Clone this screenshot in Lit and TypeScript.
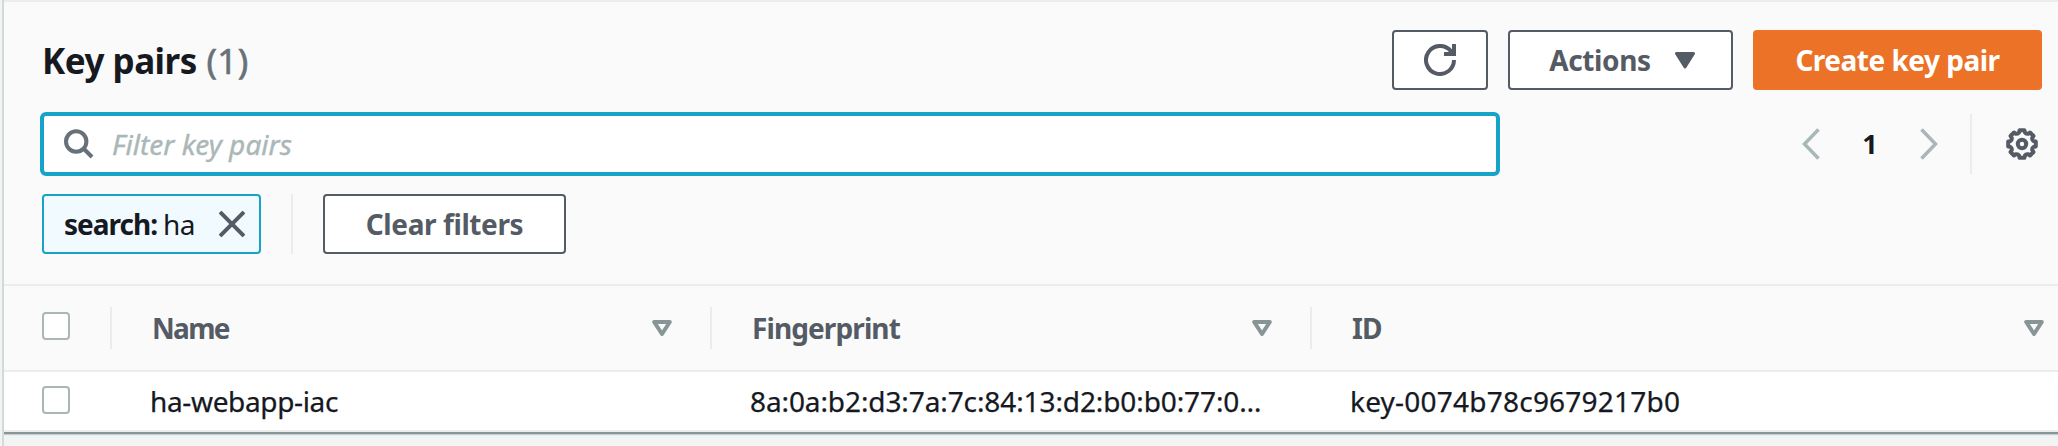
import { LitElement, html, css, svg } from "lit";
import { customElement } from "lit/decorators.js";

const chevron = (points: string) => html`
  <svg class="chevron" width="20" height="32" viewBox="0 0 20 32">${svg`<polyline points=${points} />`}</svg>`;

const sortIcon = html`
  <svg class="sort" width="20" height="16" viewBox="0 0 20 16">
    <path d="M2.2 2h15.6L10 14z" />
  </svg>`;

/* Outline of an eight-toothed cog centred on (16, 16). */
const gearPath = (() => {
  const parts: string[] = [];
  const at = (deg: number, r: number) => {
    const a = (deg * Math.PI) / 180;
    return `${(16 + r * Math.sin(a)).toFixed(2)} ${(16 - r * Math.cos(a)).toFixed(2)}`;
  };
  for (let i = 0; i < 8; i++) {
    const d = i * 45;
    parts.push(
      `${i ? "L" : "M"}${at(d - 10, 14)}L${at(d + 10, 14)}L${at(d + 14, 12)}Q${at(d + 22.5, 10.6)} ${at(d + 31, 12)}`
    );
  }
  return parts.join("") + "Z";
})();

@customElement("app-root")
export class AppRoot extends LitElement {
  static styles = css`
    :host {
      display: block;
      height: 446px;
      box-sizing: border-box;
      padding-left: 2px;
      overflow: hidden;
      background: #f2f3f3;
      color: #16191f;
      font: 28px/36px "Noto Sans", "Open Sans", sans-serif;
      white-space: nowrap;
    }
    * { box-sizing: border-box; }
    svg { display: block; flex: none; fill: none; }
    .shell {
      height: 446px;
      border-left: 2px solid;
      border-image: linear-gradient(90deg, #d5dbdb 50%, #aab7b8 50%) 2;
    }
    .panel {
      height: 434px;
      display: flex;
      flex-direction: column;
      background: #fff;
      border-top: 2px solid #eaeded;
      border-bottom: 2px solid #879596;
      box-shadow: 0 1px 1px #c8cfd0;
    }
    .top {
      height: 284px;
      flex: none;
      padding: 28px 16px 0 36px;
      background: #fafafa;
      border-bottom: 2px solid #eaeded;
    }
    .bar { display: flex; align-items: center; height: 60px; }
    .title { flex: 1; padding: 2px 0 0 2px; font-size: 35px; font-weight: 700; letter-spacing: -0.5px; }
    .count { font-weight: 400; color: #687078; letter-spacing: 0.4px; margin-left: 1px; -webkit-text-stroke: 0.6px #687078; }
    .btn {
      height: 60px;
      display: flex;
      align-items: center;
      justify-content: center;
      padding-bottom: 1px;
      border: 2px solid #545b64;
      border-radius: 4px;
      background: #fff;
      color: #545b64;
      font-weight: 700;
      letter-spacing: -0.4px;
    }
    .refresh { width: 96px; padding-bottom: 0; }
    .refresh svg { stroke: #545b64; stroke-width: 4; }
    .actions { width: 225px; margin: 0 20px; padding-left: 3px; gap: 24px; }
    .caret { fill: #545b64; stroke: #545b64; stroke-width: 3; stroke-linejoin: round; margin-top: 1px; }
    .create { width: 289px; border-color: #eb7226; background: #eb7226; color: #fff; letter-spacing: -0.5px; }
    .filter { height: 64px; margin: 22px 0 18px -2px; padding-left: 2px; }
    .search {
      width: 1460px;
      height: 64px;
      display: flex;
      align-items: center;
      gap: 18px;
      padding-left: 20px;
      border: 4px solid #16a3c8;
      border-radius: 6px;
      background: #fff;
      color: #aab7b8;
      font-style: italic;
      letter-spacing: 0.05px;
      -webkit-text-stroke: 0.4px #aab7b8;
    }
    .search svg { stroke: #687078; stroke-width: 4; }
    .pager { margin-left: auto; display: flex; align-items: center; height: 60px; }
    .chevron { stroke: #aab7b8; stroke-width: 3.5; }
    .page { width: 99px; padding-left: 1px; text-align: center; font-weight: 700; font-size: 27px; }
    .vline { width: 2px; height: 60px; background: #eaeded; }
    .pager .vline { margin: 0 34px 0 31px; }
    .gear { stroke: #545b64; stroke-width: 4; stroke-linejoin: round; margin-right: 4px; }
    .chip {
      width: 219px;
      height: 60px;
      display: flex;
      align-items: center;
      padding: 0 14px 1px 20px;
      border: 2px solid #16a3c8;
      border-radius: 4px;
      background: #f1faff;
    }
    .chip b { letter-spacing: -1px; margin-right: 6px; }
    .chip span { letter-spacing: -0.6px; }
    .chip svg { margin: 1px 0 0 auto; stroke: #545b64; stroke-width: 4; }
    .tokens { padding-left: 2px; }
    .tokens .vline { margin: 0 30px; }
    .clear { width: 243px; }
    .row {
      display: grid;
      grid-template-columns: 106px 600px 600px 1fr;
      align-items: center;
    }
    .head { height: 86px; background: #fafafa; border-bottom: 2px solid #eaeded; color: #545b64; font-weight: 700; }
    .body { height: 60px; border-bottom: 2px solid #eaeded; -webkit-text-stroke: 0.25px #16191f; }
    .box { width: 28px; height: 28px; margin-left: 38px; border: 2px solid #aab7b8; border-radius: 4px; background: #fff; }
    .head .box { margin-bottom: 4px; }
    .body .box { margin-bottom: 2px; }
    .th {
      height: 42px;
      display: flex;
      align-items: center;
      justify-content: space-between;
      padding: 0 38px 0 40px;
      border-left: 2px solid #eaeded;
      letter-spacing: -0.9px;
    }
    .th:last-child { padding-right: 14px; }
    .th:nth-child(2) { letter-spacing: -1.7px; }
    .sort { stroke: #879596; stroke-width: 4; stroke-linejoin: round; }
    .td { padding-left: 40px; }
    .name { letter-spacing: -0.35px; }
    .print { letter-spacing: -0.1px; }
    .id { letter-spacing: 0.22px; }
  `;

  render() {
    return html`
      <div class="shell">
      <div class="panel">
        <div class="top">
          <div class="bar">
            <div class="title">Key pairs <span class="count">(1)</span></div>
            <div class="btn refresh">
              <svg width="32" height="32" viewBox="0 0 32 32">
                <path d="M30 16A14 14 0 1 1 27 7.3L29 10" />
                <path d="M30 0V10H20" />
              </svg>
            </div>
            <div class="btn actions">
              Actions
              <svg class="caret" width="20" height="18" viewBox="0 0 20 18"><path d="M1.5 2.5h17L10 16z" /></svg>
            </div>
            <div class="btn create">Create key pair</div>
          </div>
          <div class="bar filter">
            <div class="search">
              <svg width="30" height="30" viewBox="0 0 30 30">
                <circle cx="12.2" cy="12.5" r="10.2" />
                <path d="M19.5 19.5L28 28" />
              </svg>
              Filter key pairs
            </div>
            <div class="pager">
              ${chevron("18.5,1.5 4.5,16 18.5,30.5")}
              <div class="page">1</div>
              ${chevron("2.5,1.5 16.5,16 2.5,30.5")}
              <div class="vline"></div>
              <svg class="gear" width="32" height="32" viewBox="0 0 32 32">
                <path d=${gearPath} />
                <circle cx="16" cy="16" r="4.2" />
              </svg>
            </div>
          </div>
          <div class="bar tokens">
            <div class="chip">
              <b>search:</b><span>ha</span>
              <svg width="26" height="26" viewBox="0 0 26 26"><path d="M1 1L25 25M25 1L1 25" /></svg>
            </div>
            <div class="vline"></div>
            <div class="btn clear">Clear filters</div>
          </div>
        </div>
        <div class="row head">
          <div class="box"></div>
          <div class="th"><span>Name</span>${sortIcon}</div>
          <div class="th"><span>Fingerprint</span>${sortIcon}</div>
          <div class="th"><span>ID</span>${sortIcon}</div>
        </div>
        <div class="row body">
          <div class="box"></div>
          <div class="td name">ha-webapp-iac</div>
          <div class="td print">8a:0a:b2:d3:7a:7c:84:13:d2:b0:b0:77:0…</div>
          <div class="td id">key-0074b78c9679217b0</div>
        </div>
      </div>
      </div>
    `;
  }
}
